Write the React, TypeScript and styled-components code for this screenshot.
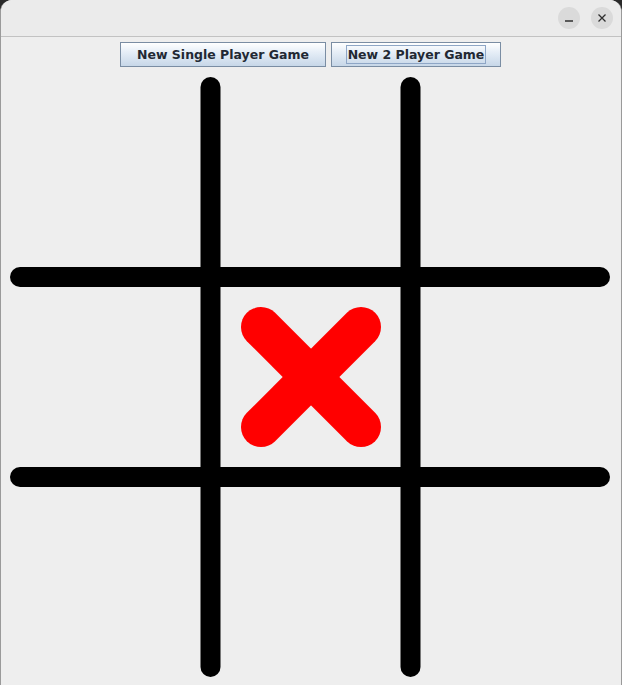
import React from 'react'
import styled, { createGlobalStyle } from 'styled-components'

const GlobalStyle = createGlobalStyle`
    html, body {
        margin: 0;
        padding: 0;
        background: #2a2a2a;
        overflow: hidden;
    }
`

const Window = styled.div`
    width: 622px;
    height: 685px;
    box-sizing: border-box;
    display: flex;
    flex-direction: column;
    background: #eeeeee;
    border-radius: 12px 12px 0 0;
    border-left: 1px solid #9a9a9a;
    border-right: 1px solid #9a9a9a;
    overflow: hidden;
`

const TitleBar = styled.div`
    height: 36px;
    flex-shrink: 0;
    display: flex;
    align-items: center;
    justify-content: flex-end;
    gap: 11px;
    padding-right: 8px;
    background: #ebebeb;
    border-bottom: 1px solid #c2c2c2;
`

const TitleButton = styled.div`
    width: 22px;
    height: 22px;
    border-radius: 50%;
    background: #dadada;
    display: flex;
    align-items: center;
    justify-content: center;
    color: #2e2e2e;
`

const Toolbar = styled.div`
    display: flex;
    justify-content: center;
    gap: 5px;
    padding: 5px 1px 5px 0;
    flex-shrink: 0;
`

const GameButton = styled.button<{ focused?: boolean }>`
    height: 25px;
    width: ${p => p.width}px;
    box-sizing: border-box;
    padding: 0;
    border: 1px solid #7a8da3;
    border-radius: 0;
    background: linear-gradient(to bottom, #ffffff 0%, #e6eef7 40%, #c7d7e8 100%);
    font-family: "DejaVu Sans", sans-serif;
    font-weight: bold;
    font-size: 12.5px;
    color: #222833;
    display: flex;
    align-items: center;
    justify-content: center;
    span {
        padding: 1px 1px;
        border: 1px solid ${p => (p.focused ? '#8ea6c6' : 'transparent')};
    }
`

const Board = styled.svg`
    display: block;
    flex-shrink: 0;
`

// board lines measured from the top of the drawing area
const gridLines = [
    { x1: 210.5, y1: 15, x2: 210.5, y2: 595 },
    { x1: 410.5, y1: 15, x2: 410.5, y2: 595 },
    { x1: 20, y1: 205, x2: 600, y2: 205 },
    { x1: 20, y1: 405, x2: 600, y2: 405 },
]

function App() {
    return (
        <>
            <GlobalStyle />
            <Window>
                <TitleBar>
                    <TitleButton>
                        <svg width="10" height="10" viewBox="0 0 10 10">
                            <line x1="1" y1="8" x2="9" y2="8" stroke="#2e2e2e" strokeWidth="1.3" />
                        </svg>
                    </TitleButton>
                    <TitleButton>
                        <svg width="10" height="10" viewBox="0 0 10 10">
                            <path d="M1.5 1.5 L8.5 8.5 M8.5 1.5 L1.5 8.5" stroke="#2e2e2e" strokeWidth="1.3" />
                        </svg>
                    </TitleButton>
                </TitleBar>
                <Toolbar>
                    <GameButton width={206}><span>New Single Player Game</span></GameButton>
                    <GameButton width={170} focused><span>New 2 Player Game</span></GameButton>
                </Toolbar>
                <Board width="620" height="613" viewBox="1 0 620 613">
                    {gridLines.map((l, i) => (
                        <line key={i} {...l} stroke="#000" strokeWidth="20" strokeLinecap="round" />
                    ))}
                    <g stroke="#ff0000" strokeWidth="40" strokeLinecap="round">
                        <line x1="261" y1="255" x2="361" y2="355" />
                        <line x1="361" y1="255" x2="261" y2="355" />
                    </g>
                </Board>
            </Window>
        </>
    )
}

export default App
